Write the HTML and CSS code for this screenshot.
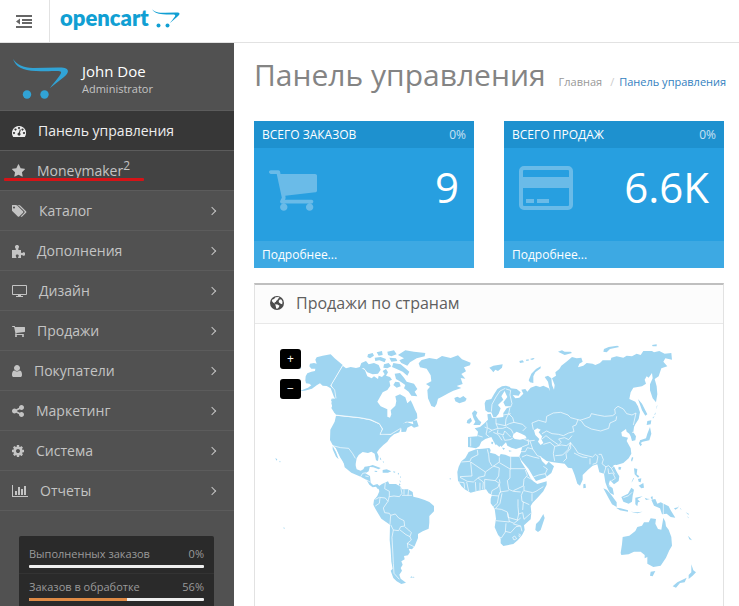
FILE: index.html
```html
<!DOCTYPE html>
<html lang="ru">
<head>
<meta charset="utf-8">
<title>Панель управления</title>
<link rel="stylesheet" href="styles.css">
</head>
<body>
<header class="topbar">
  <button class="menu-toggle" type="button" aria-label="Меню">
    <svg viewBox="0 0 16 13" aria-hidden="true"><path d="M0 0h16v2H0zM6 4h10v2H6zM6 7h10v2H6zM0 11h16v2H0zM0 6.500 4 3.500v6z"/></svg>
  </button>
  <a class="brand" href="#"><span>opencart</span>
    <svg viewBox="0 0 28 20" aria-hidden="true"><path d="M0 0C2 3 6 3.800 13 3.800L24 3.600C29 3.500 28 5.500 25 8L18 14C20 11 24 7 23 6C22 5.200 17 6 11 5.300C5 4.800 2 3.500 0 0Z"/><circle cx="6.500" cy="16.500" r="2"/><circle cx="15.500" cy="16.500" r="2"/></svg>
  </a>
</header>
<div class="layout">
  <aside class="sidebar">
    <div class="profile">
      <svg viewBox="0 0 55 42" aria-hidden="true"><path d="M0 1C4 7 10 9.500 20 10L45 9.500C57 9 57 14 51 19L37 30C42 23 49 16 48 14C47 12 38 14 23 13C9 12.500 3 9 0 1Z"/><circle cx="14" cy="36.500" r="4.200"/><circle cx="31.500" cy="36.500" r="4.200"/></svg>
      <div><div class="profile-name">John Doe</div><div class="profile-role">Administrator</div></div>
    </div>
    <nav>
      <ul class="menu">
        <li><a class="active" href="#"><svg viewBox="0 0 1792 1792"><path fill-rule="evenodd" d="M896 256a896 896 0 0 1 760 1370q-19 30-54 30H190q-35 0-54-30A896 896 0 0 1 896 256zM256 1024a128 128 0 1 0 .1 0zM448 576a128 128 0 1 0 .1 0zM896 384a128 128 0 1 0 .1 0zM1344 576a128 128 0 1 0 .1 0zM1536 1024a128 128 0 1 0 .1 0zM1082 704l-50-16q-26-2-38 26l-102 384c-90 8-170 80-178 180a192 192 0 1 0 304-138l101-382q6-34-37-54z"/></svg>Панель управления</a></li>
        <li><a class="open" href="#"><svg viewBox="64 0 1664 1792"><path d="M1728 647q0 22-26 48l-363 354 86 500q1 7 1 20 0 21-10.500 35.500t-30.500 14.500q-19 0-40-12l-449-236-449 236q-22 12-40 12-21 0-31.500-14.500t-10.500-35.500q0-6 2-20l86-500-364-354q-25-27-25-48 0-37 56-46l502-73 225-455q19-41 49-41t49 41l225 455 502 73q56 9 56 46z"/></svg><span>Moneymaker<sup>2</sup></span></a></li>
        <li><a href="#"><svg viewBox="0 0 1920 1792"><path d="M384 448q0-53-37.500-90.500t-90.500-37.500-90.500 37.500-37.500 90.500 37.500 90.500 90.500 37.500 90.500-37.500 37.500-90.500zm1067 576q0 53-37 90l-491 492q-39 37-91 37-53 0-90-37l-715-716q-38-37-64.500-101t-26.500-117v-416q0-52 38-90t90-38h416q53 0 117 26.500t102 64.500l715 714q37 39 37 91zm384 0q0 53-37 90l-491 492q-39 37-91 37-36 0-59-14t-53-45l470-470q37-37 37-90 0-52-37-91l-715-714q-38-38-102-64.500t-117-26.500h224q53 0 117 26.500t102 64.500l715 714q37 39 37 91z"/></svg>Каталог<i></i></a></li>
        <li><a href="#"><svg viewBox="0 0 13 14"><path d="M0 6h3.600C4.600 5 2.600 3.800 3 2.600 3.300.6 6.700.6 7 2.600 7.200 3.900 5.600 5 6.600 6H9v2.600c1 1 1.800-.6 3-.4 1.600.3 1.600 3.300 0 3.600-1.200.2-2-1.400-3-.4V14H6.300c-.8-1 .6-1.500.4-2.500-.3-1.300-2.600-1.300-2.900 0C3.600 12.500 5 13 4.200 14H0z"/></svg>Дополнения<i></i></a></li>
        <li><a href="#"><svg viewBox="0 0 15 14"><path d="M1 1h13a1 1 0 0 1 1 1v8a1 1 0 0 1-1 1H9v1h2v1H4v-1h2v-1H1a1 1 0 0 1-1-1V2a1 1 0 0 1 1-1zM1 2v8h13V2z" fill-rule="evenodd"/></svg>Дизайн<i></i></a></li>
        <li><a href="#"><svg viewBox="64 0 1664 1792"><path d="M704 1536q0 52-38 90t-90 38-90-38-38-90 38-90 90-38 90 38 38 90zm896 0q0 52-38 90t-90 38-90-38-38-90 38-90 90-38 90 38 38 90zm128-1088v512q0 24-16.500 42.500t-40.500 21.500l-1044 122q13 60 13 70 0 16-24 64h920q26 0 45 19t19 45-19 45-45 19h-1024q-26 0-45-19t-19-45q0-11 8-31.500t16-36 21.500-40 15.500-29.500l-177-823h-204q-26 0-45-19t-19-45 19-45 45-19h256q16 0 28.500 6.500t19.500 15.500 13 24.500 8 26 5.500 29.500 4.500 26h1201q26 0 45 19t19 45z"/></svg>Продажи<i></i></a></li>
        <li><a href="#"><svg viewBox="256 0 1280 1792"><path d="M1536 1399q0 109-62.500 187t-150.500 78h-854q-88 0-150.500-78t-62.500-187q0-85 8.500-160.500t31.500-152 58.500-131 94-89 134.500-34.500q131 128 313 128t313-128q76 0 134.500 34.500t94 89 58.500 131 31.500 152 8.500 160.500zm-256-887q0 159-112.500 271.500t-271.500 112.500-271.500-112.500-112.500-271.500 112.500-271.500 271.500-112.500 271.500 112.500 112.500 271.500z"/></svg>Покупатели<i></i></a></li>
        <li><a href="#"><svg viewBox="128 0 1536 1792"><path d="M1344 1024q133 0 226.500 93.500t93.500 226.500-93.500 226.500-226.500 93.500-226.500-93.500-93.500-226.500q0-12 2-34l-360-180q-92 86-218 86-133 0-226.500-93.500t-93.500-226.500 93.500-226.500 226.500-93.500q126 0 218 86l360-180q-2-22-2-34 0-133 93.500-226.500t226.500-93.500 226.500 93.500 93.500 226.500-93.500 226.500-226.500 93.500q-126 0-218-86l-360 180q2 22 2 34t-2 34l360 180q92-86 218-86z"/></svg>Маркетинг<i></i></a></li>
        <li><a href="#"><svg viewBox="128 0 1536 1792"><path d="M1152 896q0-106-75-181t-181-75-181 75-75 181 75 181 181 75 181-75 75-181zm512-109v222q0 12-8 23t-20 13l-185 28q-19 54-39 91 35 50 107 138 10 12 10 25t-9 23q-27 37-99 108t-94 71q-12 0-26-9l-138-108q-44 23-91 38-16 136-29 186-7 28-36 28h-222q-14 0-24.500-8.500t-11.500-21.500l-28-184q-49-16-90-37l-141 107q-10 9-25 9-14 0-25-11-126-114-165-168-7-10-7-23 0-12 8-23 15-21 51-66.500t54-70.500q-27-50-41-99l-183-27q-13-2-21-12.500t-8-23.500v-222q0-12 8-23t19-13l186-28q14-46 39-92-40-57-107-138-10-12-10-24 0-10 9-23 26-36 98.500-107.500t94.500-71.500q13 0 26 10l138 107q44-23 91-38 16-136 29-186 7-28 36-28h222q14 0 24.500 8.500t11.500 21.500l28 184q49 16 90 37l142-107q9-9 24-9 13 0 25 10 129 119 165 170 7 8 7 22 0 12-8 23-15 21-51 66.500t-54 70.500q26 50 41 98l183 28q13 2 21 12.500t8 23.500z"/></svg>Система<i></i></a></li>
        <li><a href="#"><svg viewBox="0 0 16 14"><path d="M0 1h1v11h15v1H0zM3 7h2v4H3zM6 3h2v8H6zM9 5h2v6H9zM12 2h2v9h-2z"/></svg>Отчеты<i></i></a></li>
      </ul>
    </nav>
    <div class="stats">
      <div class="stat"><div class="stat-line"><span>Выполненных заказов</span><span>0%</span></div><div class="bar"><div style="width:0%"></div></div></div>
      <div class="stat"><div class="stat-line"><span>Заказов в обработке</span><span>56%</span></div><div class="bar"><div style="width:56%"></div></div></div>
    </div>
  </aside>
  <main class="content">
    <div class="page-head">
      <h1>Панель управления</h1>
      <nav class="crumbs"><a href="#">Главная</a><span>/</span><a class="current" href="#">Панель управления</a></nav>
    </div>
    <div class="tiles">
      <section class="tile">
        <div class="tile-head"><span>Всего заказов</span><span class="pct">0%</span></div>
        <div class="tile-body"><svg class="cart" viewBox="64 256 1664 1408" aria-hidden="true"><path d="M704 1536q0 52-38 90t-90 38-90-38-38-90 38-90 90-38 90 38 38 90zm896 0q0 52-38 90t-90 38-90-38-38-90 38-90 90-38 90 38 38 90zm128-1088v512q0 24-16.500 42.500t-40.500 21.500l-1044 122q13 60 13 70 0 16-24 64h920q26 0 45 19t19 45-19 45-45 19h-1024q-26 0-45-19t-19-45q0-11 8-31.500t16-36 21.500-40 15.500-29.500l-177-823h-204q-26 0-45-19t-19-45 19-45 45-19h256q16 0 28.500 6.500t19.500 15.500 13 24.500 8 26 5.500 29.500 4.500 26h1201q26 0 45 19t19 45z"/></svg><strong>9</strong></div>
        <a class="tile-foot" href="#">Подробнее...</a>
      </section>
      <section class="tile">
        <div class="tile-head"><span>Всего продаж</span><span class="pct">0%</span></div>
        <div class="tile-body"><svg class="card" viewBox="0 0 54 44" aria-hidden="true"><path fill-rule="evenodd" d="M5 0h44a5 5 0 0 1 5 5v34a5 5 0 0 1-5 5H5a5 5 0 0 1-5-5V5a5 5 0 0 1 5-5zM5 4q-1 0-1 1v6h46V5q0-1-1-1zM4 22v17q0 1 1 1h44q1 0 1-1V22zM7 33h8v4H7zM18 33h12v4H18z"/></svg><strong>6.6K</strong></div>
        <a class="tile-foot" href="#">Подробнее...</a>
      </section>
    </div>
    <section class="panel">
      <h2><svg viewBox="0 0 14 14" aria-hidden="true"><circle cx="7" cy="7" r="7"/><path fill="#fcfcfc" d="M5.500 1.200 8.500 1l1 1-1.300.6L7.500 4l-1.200.8L5.800 6l-1.300.2L5 7.500 3.300 6.800 1.800 5l.6-1.500L4 3zM10 3.200l1.600.6.9 2-.3 2.400-1.500-.4L9 6.600l-.4-1.600zM5.200 8.300l2.300.2 2 1.300-.8 1.600-1.500 1.400-1-.2-.4-2z"/></svg>Продажи по странам</h2>
      <div class="map">
        <svg viewBox="255 324 468 282" role="img" aria-label="Карта мира">
          <g class="land" transform="translate(300 335) scale(.33333)">
            <path d="M0 168 14 162 24 158 34 151 28 146 18 145 16 136 17 124 22 115 34 110 45 108 46 101 34 101 28 94 30 86 42 84 50 86 46 74 50 67 68 62 92 58 104 70 128 90 92 152 104 165 108 190 102 186 92 160 80 153 68 152 60 145 50 151 36 161 14 167Z"/>
            <path d="M128 92 138 100 152 96 168 99 180 96 195 106 202 124 215 130 222 124 234 132 236 122 246 126 254 118 248 108 258 102 264 112 258 122 270 126 276 134 268 138 271 152 262 165 248 172 240 186 232 200 242 214 262 223 262 245 270 248 274 238 272 226 286 212 289 198 286 184 300 178 316 187 322 205 332 196 338 208 345 224 351 236 352 250 336 260 318 260 304 270 302 282 274 298 246 300 240 296 248 282 238 266 212 254 180 248 108 240 100 226 94 205 98 190 104 192 102 165 94 150Z"/>
            <path d="M304 282 300 268 322 262 340 268 338 258 350 256 356 274 342 278 334 272 322 278 318 290 304 291Z"/>
            <path d="M108 242 180 250 210 256 238 268 246 282 240 298 272 299 302 280 298 292 282 298 270 308 262 320 250 330 238 342 231 352 236 364 234 378 228 376 224 356 214 350 204 354 188 351 176 360 170 370 166 392 138 395 120 366 108 340 98 330 90 315 91 284 104 260Z"/>
            <path d="M184 84 198 78 206 88 222 84 236 90 242 104 234 116 218 118 202 112 192 100 178 100ZM204 58 218 54 222 62 210 70 202 66ZM230 52 246 48 248 60 236 62ZM224 68 242 66 258 72 254 82 238 76 226 78ZM262 50 282 46 290 58 274 64 264 60ZM268 68 288 70 292 78 274 80ZM252 88 266 84 274 94 262 100 250 98ZM280 84 302 88 316 100 328 110 322 122 308 110 290 102 276 96ZM284 116 300 114 312 128 320 140 342 146 352 162 344 170 352 184 334 182 326 170 312 160 316 150 302 140 288 132ZM286 140 298 142 302 154 290 158 280 150ZM294 60 316 46 342 50 376 54 374 64 350 70 330 82 322 92 304 84 298 76 312 70Z"/>
            <path d="m-2 96 5 2-1 4-5-2zM-12 170l-8 2 6-6zM-30 180l-6 1 3-3zM96 190l8 14-4 4-7-12zM98 210l12 24-6 1-10-16z"/>
          </g>
          <g class="land" transform="translate(240 270) scale(.33333)">
            <path d="M536 280 545 270 568 264 590 268 606 258 632 264 654 256 666 268 692 278 690 286 672 292 678 304 664 312 676 326 662 324 668 342 650 348 664 354 640 362 625 370 606 380 594 386 590 402 584 412 574 408 564 385 562 360 570 350 558 342 574 334 572 316 560 296 540 292Z"/>
            <path d="M643 384 652 380 660 384 670 378 680 386 676 394 658 400 646 394ZM106 564l6 4-3 4zM118 572l5 4-4 1zM130 772l5 2-3 3z"/>
          </g>
          <g class="land" transform="translate(330 450) scale(.33333)">
            <path d="M14-15 62 6 78 24 75 40 80 58 92 62 100 58 104 50 120 48 116 64 106 70 120 78 122 98 130 106 142 102 152 112 144 118 138 110 128 112 118 104 110 90 92 80 64 68 44 52 40 34 28 14ZM8-12 18 6 26 28 18 20 8-2Z"/>
            <path d="M112 50 128 45 152 54 146 58 130 52ZM158 60l12-2 14 6-10 4-16 0ZM134 62l8 1-1 3-7-1zM190 64l6 1-1 3-5-1zM205 68l2 2-1 4-3-2zM210 78l3 3-2 4zM209 90l3 4-2 4zM208 100l4 4-6 4zM150 22l3 4 1 5-4-3zM158 32l4 4-2 3z"/>
            <path d="M156 102 174 94 178 102 198 102 212 110 216 118 234 118 248 126 250 140 266 144 284 150 298 156 312 168 312 184 298 198 298 218 296 236 278 244 264 252 264 264 254 288 246 298 236 296 240 306 234 316 222 318 224 328 214 334 218 344 212 354 216 362 208 374 212 386 228 398 214 402 200 394 190 384 182 362 188 356 184 335 182 300 179 270 180 224 168 216 154 206 144 190 136 176 130 164 132 150 142 138 148 124 144 110ZM240 382l6-3 2 5zM249 380l5 1-4 3zM356 80l4 4zM358 86l5-2-2 5z"/>
          </g>
          <g class="land" transform="translate(450 335) scale(.33333)">
            <path d="M104 205 108 196 124 192 132 178 142 162 156 154 168 152 180 156 184 164 166 164 154 184 160 194 150 204 144 210 152 220 146 236 138 246 130 246 124 232 114 232 106 226Z"/>
            <path d="M162 164 170 156 182 160 200 162 212 172 206 182 188 180 196 190 208 188 220 176 214 164 226 162 232 170 242 158 258 152 270 156 280 152 296 160 300 168 294 140 284 126 294 122 304 130 306 150 312 164 314 150 306 130 318 122 316 112 328 102 334 92 352 78 366 66 380 70 394 68 398 80 388 86 384 97 400 92 410 84 428 86 436 90 450 84 458 76 482 76 484 68 500 64 520 68 530 62 546 64 560 56 572 60 580 48 606 48 612 52 628 48 644 56 664 54 666 74 646 70 640 80 652 94 634 100 626 124 614 132 620 154 622 178 618 202 608 190 600 166 600 148 608 130 606 114 596 128 590 124 584 134 588 146 576 154 550 158 542 172 538 192 556 200 564 214 570 232 566 252 556 268 552 276 550 292 558 304 556 316 546 318 542 304 538 296 530 290 528 282 514 292 516 304 534 308 530 318 542 340 544 356 536 370 520 384 500 390 490 390 500 410 508 424 506 438 492 448 480 436 476 448 488 460 492 480 480 474 472 458 466 442 462 416 448 412 442 388 428 392 414 404 398 420 398 434 390 452 382 446 374 420 366 400 354 398 344 386 310 382 290 378 270 364 276 378 288 390 296 380 312 394 304 414 286 428 258 438 250 426 236 402 214 376 208 364 214 350 216 336 198 342 184 338 172 332 168 322 154 336 148 324 136 312 130 304 142 318 156 328 148 336 132 322 124 306 106 312 94 320 88 334 78 340 54 336 54 306 82 304 84 290 74 280 90 276 104 264 114 254 112 238 122 236 126 248 142 248 160 246 160 234 170 220 184 214 166 214 160 202 172 186Z"/>
            <path d="M66 234 74 226 82 232 78 242 86 254 94 262 90 270 70 270 76 260 70 248ZM52 256 62 248 66 258 58 266 50 264ZM118 98 130 92 158 88 156 98 144 108 136 104 130 112 124 104ZM236 136 244 116 258 102 272 94 272 100 256 112 250 124 250 144 240 142ZM208 78 218 76 222 82 210 84ZM228 74l8-1 0 4-8 0ZM240 72l10-3 4 2-8 4ZM324 50 336 46 344 50 362 50 366 54 344 60ZM462 42l14-6 26-4 6 4-28 6-10 10-10-2ZM606 30l14-2 0 6-12 0ZM136 318l5 5-3 8-4-5zM124 320l6 1-2 7-4-2zM156 338l9 1-4 6zM176 346l10 2-8 2zM212 346l8-3-4 5z"/>
            <path d="M564 192 576 206 592 238 586 242 576 226ZM592 258 604 256 602 268 590 270ZM600 276 604 296 598 316 578 320 568 326 570 316 588 310 592 296ZM568 320l8 8-4 6-5-8ZM622 210l-2 14 0-10zM618 232l-3 8-2-2zM614 242l-4 8-3-1zM400 448 406 446 408 458 400 460ZM546 366 550 368 546 380 543 376ZM506 395l8 2-3 8-6-2Z"/>
            <path d="M460 460 470 464 484 480 500 502 500 516 486 508 476 490ZM498 518 512 520 534 526 534 530 510 526ZM514 486 534 476 544 458 552 464 548 482 546 500 536 506 520 500ZM556 488 578 484 570 488 562 492 570 500 564 502 562 514 556 508ZM584 488l8 3 8 1-12 3zM602 486l6-2 0 10-4-3ZM542 530l18 2 18-2-16 5zM552 400 562 402 560 418 568 424 564 428 554 418ZM564 432 574 430 572 442 566 440ZM566 452 580 444 582 458 574 460 568 454ZM548 438l4-8-2-1-6 14ZM604 494 616 492 622 506 632 502 656 514 662 526 676 548 662 546 650 536 636 538 630 520 612 512ZM672 520l12-3 4-8-4 10-8 5zM690 518l5 6-4-2zM700 525l8 5zM707 532l10 5-2 2zM712 543l5 7-3-2zM642 166l4 2zM646 167l3 3zM370 466l1 4zM371 474l1 4z"/>
            <path d="M512 654 516 628 518 606 538 602 556 588 562 576 576 572 582 562 596 562 602 550 618 552 616 566 624 582 634 584 640 548 646 560 648 574 656 584 664 606 666 632 658 646 648 668 632 692 610 696 592 686 592 666 584 670 584 660 572 650 552 650 536 658 514 660ZM602 710 616 708 608 724 600 722ZM724 688 730 706 738 712 728 722 716 732 716 720 724 712ZM710 728 704 742 690 744 678 758 668 754 682 742ZM714 602l6 6 6 8-8-3zM734 570l3 6zM736 580l2 3zM772 592l4 4z"/>
          </g>
          <g class="land" transform="translate(450 430) scale(.33333)">
            <path d="M56 66 66 62 78 58 98 56 118 54 122 60 120 68 136 72 148 80 152 72 166 74 180 80 208 80 214 96 224 112 232 126 240 142 250 154 262 162 290 154 290 164 280 184 264 202 248 218 242 228 244 248 242 268 222 286 224 300 216 316 204 330 190 342 160 348 152 340 152 326 144 314 134 292 138 266 134 236 122 220 122 206 126 194 116 190 108 178 84 182 62 188 44 178 34 168 24 152 22 126 26 110 34 94 46 84ZM258 282 268 272 280 252 284 264 272 300 264 306 256 300ZM304 222l2 8zM299 230l3 3zM298 294l4 3zM308 288l5 4zM22 62l2 6zM18 84l5 3zM0 140l2 5zM110 200l4 3z"/>
          </g>
          <g class="sea" transform="translate(450 335) scale(.33333)"><path d="M190 298 200 290 214 296 226 302 230 310 210 314 194 312 188 306ZM252 286 262 280 272 284 266 292 276 304 274 312 280 324 272 330 264 320 268 312 256 300Z"/></g>
          <g class="borders" transform="translate(300 335) scale(.33333)"><path d="M128 92 92 152 104 165 108 190M106 240 180 248 212 254 238 266 248 282 240 298 272 298 302 280M98 332 122 338 146 340 158 356 166 370"/></g>
          <g class="borders" transform="translate(330 450) scale(.33333)"><path d="M92 80 98 70 108 68M106 78 116 80M110 90 120 96M166 98 164 116 178 124 178 138 174 154M178 140 192 138 208 140 216 130 212 112M222 118 222 134M236 118 234 136M216 136 246 136M174 154 166 144 148 142 136 148M150 144 148 160 136 168M174 154 160 174 164 188 178 190 182 196 180 222M182 196 196 192 206 204 222 212 224 228 212 230 206 242 190 240 182 224M224 230 236 240 244 248 240 260 228 254 210 240M240 260 244 270 232 280 234 294M232 280 252 290M190 240 186 262 188 300 190 340 192 370 208 388"/></g>
          <g class="borders" transform="translate(450 335) scale(.33333)"><path d="M124 230 126 208 138 186 150 168 166 160M168 162 182 166 180 180 186 206 182 216M180 216 176 236 188 248 192 262 218 268 228 278 218 288M160 240 182 236M138 250 138 266 166 272 168 252 176 236M166 272 178 266 192 262M110 262 112 278 126 286 144 280 138 266M84 302 98 306M62 308 62 334M104 276 112 280 108 298 118 306M126 286 116 292M144 280 158 280 170 276 184 284 190 296M144 284 142 294 160 300 164 288 182 306M130 292 144 298 156 316M158 302 164 316 180 314 188 310M220 312 236 318 254 316M216 336 236 328 234 312M250 284 246 264 266 256 288 262 290 244 310 234 332 232 354 240 362 248 384 254 392 256M384 254 378 270 368 274 372 290 356 294 340 302 326 298 306 296 290 288 276 296M390 256 420 246 424 236 442 240 464 244 488 242 496 236 494 222 504 214 520 222 530 236 546 240 558 234 554 252 550 270M394 258 404 272 424 282 452 288 476 280 480 264 498 256 500 244M276 312 288 302 306 316 326 330 334 322 326 312 344 308 356 314 366 302M280 328 300 322 314 334 310 356 314 378M314 334 334 330 350 332 362 322 354 344 338 360 316 362M340 380 350 370 348 356 362 340 362 324 374 338 384 354 402 360 428 366 436 358 444 364 440 384 428 388M372 354 396 366 412 368M420 370 420 388M446 358 454 358 460 374 456 386 468 396 462 416M466 396 476 392 484 400 496 390M474 400 476 416 488 414 496 430 484 438M484 400 494 418M476 452 486 456M240 318 248 342 262 362 274 366M214 350 226 350 232 338 248 342M216 366 230 360 250 366 268 370M250 426 266 420 286 416 292 402 280 394M286 416 290 426M520 488 536 482 546 472M640 504 640 538M546 292 552 292"/></g>
          <g class="borders" transform="translate(450 430) scale(.33333)"><path d="M82 60 84 74 64 84 60 94 34 96M62 96 106 126 148 96 148 82M62 96 66 138 30 140M148 98 182 118 182 80M182 116 226 116M106 126 104 138 86 142 70 156 52 154 30 142M112 58 116 74 118 94 126 108M130 108 148 114 146 138 136 152 104 148 104 178M84 144 100 156 98 178M76 156 78 184M50 156 56 184M24 156 42 158 44 176M90 158 90 180M136 152 148 160 144 172 126 182 124 192M148 162 152 188M180 118 180 144 172 152 176 178 190 184M148 148 150 160M176 182 150 186 146 198 124 196M226 120 232 136 222 148 220 168 190 182M230 140 256 154M222 168 222 182 248 188 258 184 280 170M220 182 214 196 216 214 238 224M190 184 212 186M246 190 246 214M146 198 142 220 130 230M156 190 150 220 136 236 154 238 172 246 174 262 202 270 206 252 204 230 204 208M138 272 178 276 174 250M206 252 218 248 222 268 242 250M220 216 218 240M178 274 192 280 212 264M168 280 166 306 154 324 144 318M166 304 182 308 198 290 212 288M190 282 212 288 216 304M188 322 194 318 200 326 192 330ZM206 312l5 2-2 6-4-3"/></g>
        </svg>
        <div class="zoom"><button type="button" aria-label="Увеличить">+</button><button type="button" aria-label="Уменьшить">−</button></div>
      </div>
    </section>
  </main>
</div>
</body>
</html>
```
FILE: styles.css
```css
* { box-sizing: border-box; }
body { margin: 0; min-height: 100vh; display: flex; flex-direction: column; background: #fff; color: #666; font: 12px/20px "Open Sans", "Noto Sans", sans-serif; }
a { color: inherit; text-decoration: none; }
button { font: inherit; border: 0; padding: 0; cursor: pointer; }
h1, h2 { margin: 0; font-weight: 400; }

.topbar { display: flex; height: 43px; border-bottom: 1px solid #e2e2e2; }
.menu-toggle { width: 50px; padding-right: 2px; border-right: 1px solid #e2e2e2; background: #fff; }
.menu-toggle svg { display: block; width: 16px; height: 13px; margin: 0 auto; fill: #666; }
.brand { display: flex; gap: 3px; padding: 8px 0 0 10px; color: #119fd3; font: 800 22px/20px Lato, sans-serif; }
.brand svg { width: 28px; height: 20px; fill: currentColor; margin-top: 1px; }

.layout { flex: 1; display: flex; }
.sidebar { flex: none; width: 234px; background: #515151; color: #c4c4c4; }
.profile { display: flex; align-items: center; gap: 14px; height: 68px; padding: 4px 14px 0 13px; border-bottom: 1px solid #5c5c5c; }
.profile svg { width: 55px; height: 42px; fill: #31a3d5; }
.profile-name { color: #fff; font-size: 15px; line-height: 20px; }
.profile-role { font-size: 11px; line-height: 15px; }
.menu { margin: 0; padding: 0; list-style: none; font-size: 14px; }
.menu a { position: relative; display: flex; align-items: center; gap: 12px; height: 40px; padding: 0 19px 0 12px; border-bottom: 1px solid #5c5c5c; }
.menu svg { flex: none; height: 14px; width: auto; fill: currentColor; }
.menu a.active { background: #373737; color: #eee; }
.menu a.open { background: #434343; }
.menu a.open::after { content: ""; position: absolute; left: 4px; top: 27px; width: 140px; height: 3px; border-radius: 1px; background: #d51317; }
.menu sup { font-size: 12px; line-height: 0; }
.menu i { width: 6px; height: 6px; margin-left: auto; border: solid currentColor; border-width: 1px 1px 0 0; transform: rotate(45deg); }

.stats { margin: 25px 20px 0 19px; padding-top: 5px; border-radius: 2px 2px 0 0; background: #2a2a2a; color: #9a9a9a; font-size: 11px; }
.stat { padding: 3px 10px 5px; }
.stat + .stat { border-top: 1px solid #333; }
.stat-line { display: flex; justify-content: space-between; margin-bottom: 1px; }
.bar { height: 3px; border-radius: 1px; background: #efefef; overflow: hidden; }
.bar div { height: 100%; background: #df8a45; }

.content { flex: 1; min-width: 0; padding: 11px 15px 0 20px; }
.page-head { display: flex; align-items: baseline; gap: 13px; height: 67px; white-space: nowrap; }
h1 { color: #848484; font-size: 30px; line-height: 42px; }
.crumbs { display: flex; gap: 5px; color: #999; font-size: 11px; }
.crumbs span { margin-left: 3px; color: #ccc; }
.crumbs .current { color: #337fc0; }

.tiles { display: grid; grid-template-columns: 1fr 1fr; gap: 30px; }
.tile { background: #279fe0; color: #fff; }
.tile-head { display: flex; justify-content: space-between; height: 27px; padding: 4px 8px; background: #1e91cf; text-transform: uppercase; }
.pct { opacity: .75; }
.tile-body { display: flex; justify-content: space-between; height: 93px; padding: 0 15px; }
.tile-body svg { fill: #6abbe8; }
.cart { width: 48px; height: 41px; margin-top: 22px; }
.card { width: 54px; height: 44px; margin-top: 18px; }
.tile-body strong { font-size: 42px; font-weight: 400; line-height: 78px; }
.tile-foot { display: block; height: 27px; padding: 4px 8px; background: #3da9e3; }

.panel { margin-top: 15px; border: 1px solid #e2e2e2; border-top: 2px solid #bfbfbf; border-bottom: 0; }
.panel h2 { display: flex; align-items: center; gap: 12px; height: 39px; padding: 0 15px 2px; border-bottom: 1px solid #e8e8e8; background: #fcfcfc; color: #5f5f5f; font-size: 16px; }
.panel h2 svg { width: 14px; height: 14px; fill: #4c4c4c; }
.map { position: relative; }
.map > svg { display: block; width: 100%; height: auto; }
.land { fill: #9fd5f1; }
.sea { fill: #fff; }
.borders { fill: none; stroke: #fff; stroke-width: 2; stroke-linejoin: round; }
.zoom { position: absolute; left: 25px; top: 25px; display: grid; gap: 10px; }
.zoom button { width: 21px; height: 20px; border-radius: 3px; background: #000; color: #fff; line-height: 18px; }
```
